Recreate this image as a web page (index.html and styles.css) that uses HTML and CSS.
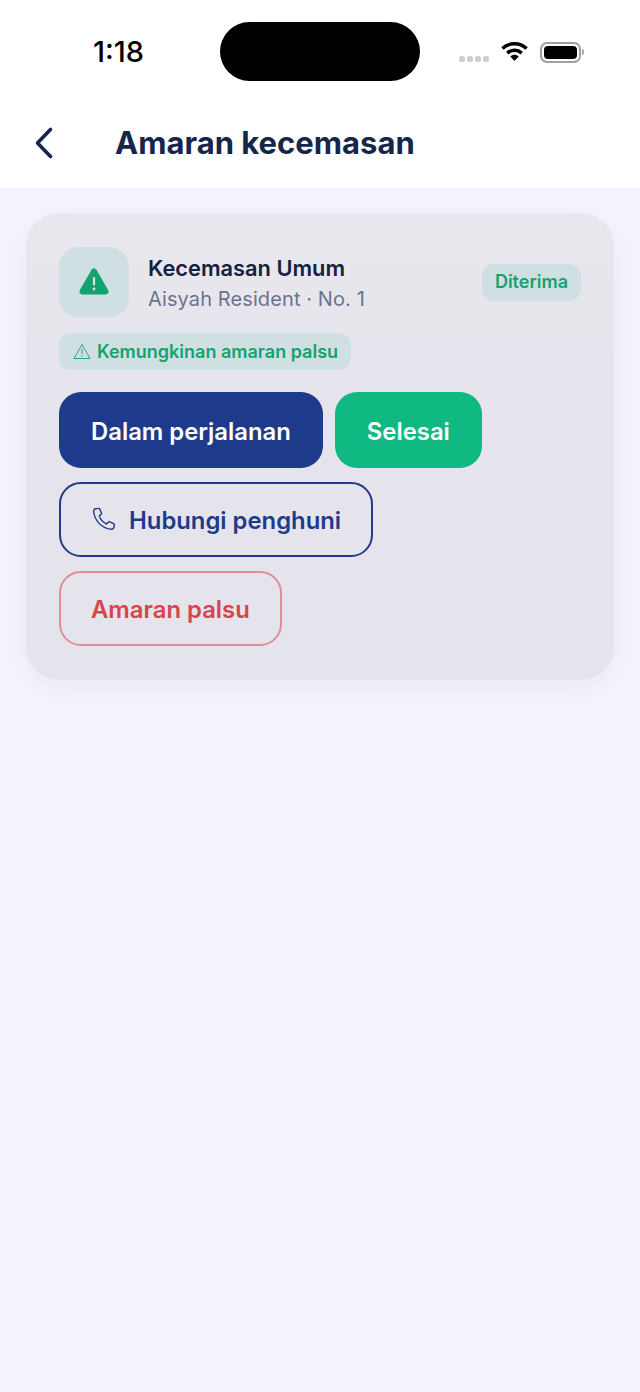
FILE: index.html
```html
<!DOCTYPE html>
<html lang="ms">
<head>
    <meta charset="UTF-8">
    <meta name="viewport" content="width=device-width, initial-scale=1.0">
    <title>Amaran kecemasan</title>
    <link rel="stylesheet" href="styles.css">
</head>
<body>
    <header class="top">
        <div class="status-bar">
            <span class="time">1:18</span>
            <div class="island"></div>
            <div class="status-icons">
                <div class="signal"><i></i><i></i><i></i><i></i></div>
                <svg class="wifi" width="27" height="21" viewBox="0 0 28 21">
                    <path d="M1.5 7.5C8.5 .8 19.5 .8 26.5 7.5" fill="none" stroke="#000" stroke-width="3.6"/>
                    <path d="M6.5 12.2C10.8 8.2 17.2 8.2 21.5 12.2" fill="none" stroke="#000" stroke-width="3.6"/>
                    <path d="M9.6 15.6C12.2 13.2 15.8 13.2 18.4 15.6L14 20.4Z" fill="#000"/>
                </svg>
                <div class="battery"><div class="battery-fill"></div></div>
                <div class="battery-cap"></div>
            </div>
        </div>
        <div class="nav">
            <svg class="back" width="22" height="34" viewBox="0 0 22 34">
                <path d="M17.5 3.5L4.5 17L17.5 30.5" fill="none" stroke="#16254a" stroke-width="3.6" stroke-linecap="round" stroke-linejoin="round"/>
            </svg>
            <h1>Amaran kecemasan</h1>
        </div>
    </header>

    <main class="content">
        <div class="card">
            <div class="card-head">
                <div class="alert-icon">
                    <svg width="32" height="30" viewBox="0 0 32 30">
                        <path d="M16 4.5L27.5 24.5H4.5Z" fill="#12a36f" stroke="#12a36f" stroke-width="6" stroke-linejoin="round"/>
                        <rect x="14.9" y="10" width="2.2" height="8.5" rx="1" fill="#d6e4e4"/>
                        <circle cx="16" cy="22" r="1.4" fill="#d6e4e4"/>
                    </svg>
                </div>
                <div class="card-info">
                    <div class="card-title">Kecemasan Umum</div>
                    <div class="card-sub">Aisyah Resident · No. 1</div>
                </div>
                <span class="badge">Diterima</span>
            </div>

            <div class="chip">
                <svg width="18" height="17" viewBox="0 0 18 17">
                    <path d="M9 1.5L17 15.5H1Z" fill="none" stroke="#12a36f" stroke-width="0.9" stroke-linejoin="round"/>
                    <path d="M9 6.2V10.6M9 12.4V13.2" fill="none" stroke="#12a36f" stroke-width="0.9" stroke-linecap="round"/>
                </svg>
                Kemungkinan amaran palsu
            </div>

            <div class="actions">
                <div class="btn-row">
                    <button class="btn btn-blue">Dalam perjalanan</button>
                    <button class="btn btn-green">Selesai</button>
                </div>
                <button class="btn btn-outline">
                    <svg width="26" height="26" viewBox="0 0 24 24">
                        <path d="M4.2 2.6L7 2.2C7.6 2.1 8 2.4 8.2 2.9L9.6 6.6C9.8 7.1 9.6 7.6 9.2 7.9L7.6 9.1C8.7 12.4 11.2 15.2 14.4 16.6L15.9 15C16.3 14.6 16.8 14.5 17.3 14.7L20.9 16.3C21.4 16.5 21.7 17 21.6 17.5L21.2 19.6C21 20.8 20 21.6 18.8 21.5C10.2 20.9 3.3 13.6 2.5 5.1C2.4 3.8 3 2.8 4.2 2.6Z" fill="none" stroke="#1e3a8a" stroke-width="1.3" stroke-linejoin="round"/>
                    </svg>
                    Hubungi penghuni
                </button>
                <button class="btn btn-danger">Amaran palsu</button>
            </div>
        </div>
    </main>
</body>
</html>
```

FILE: styles.css
```css
html, body {
    margin: 0;
    padding: 0;
}
body {
    width: 640px;
    height: 1392px;
    overflow: hidden;
    font-family: Inter, "Noto Sans", sans-serif;
    background: #f3f4fd;
}
.top {
    background: #fff;
    height: 188px;
}
.status-bar {
    height: 98px;
    box-sizing: border-box;
    padding: 22px 0 0 93px;
    display: flex;
    align-items: flex-start;
}
.time {
    width: 127px;
    font-size: 29px;
    font-weight: 500;
    line-height: 60px;
    color: #000;
}
.island {
    width: 200px;
    height: 59px;
    background: #000;
    border-radius: 30px;
}
.status-icons {
    display: flex;
    align-items: center;
    height: 59px;
    margin-left: 39px;
}
.signal {
    display: flex;
    gap: 2px;
    margin-top: 14px;
    margin-right: 12px;
}
.signal i {
    width: 6px;
    height: 6px;
    border-radius: 2px;
    background: #d0d0d0;
}
.wifi {
    margin-top: -1px;
}
.battery {
    width: 41px;
    height: 21px;
    box-sizing: border-box;
    margin-left: 12px;
    margin-top: 1px;
    padding: 2px;
    border: 2px solid #a0a0a0;
    border-radius: 7px;
}
.battery-fill {
    height: 100%;
    background: #000;
    border-radius: 4px;
}
.battery-cap {
    width: 2px;
    height: 6px;
    margin-left: 1px;
    margin-top: 1px;
    background: #a5a5a5;
    border-radius: 0 2px 2px 0;
}
.nav {
    height: 90px;
    box-sizing: border-box;
    padding: 0 0 1px 33px;
    display: flex;
    align-items: center;
}
.back {
    margin-right: 60px;
}
.nav h1 {
    margin: 0 0 1px;
    font-size: 31px;
    font-weight: 700;
    color: #16254a;
}
.content {
    padding: 25px 26px 0;
}
.card {
    height: 467px;
    box-sizing: border-box;
    padding: 34px 33px;
    border-radius: 32px;
    background: linear-gradient(180deg, #eae8ee 0%, #e6e4ec 35%, #e4e4ec 100%);
    box-shadow: 0 8px 30px rgba(30, 40, 90, 0.05);
}
.card-head {
    display: flex;
    align-items: center;
}
.alert-icon {
    width: 70px;
    height: 70px;
    border-radius: 20px;
    background: #d0dfe1;
    display: flex;
    align-items: center;
    justify-content: center;
}
.card-info {
    flex: 1;
    margin-left: 19px;
    padding-top: 3px;
}
.card-title {
    font-size: 21.8px;
    font-weight: 600;
    color: #14213f;
    line-height: 30px;
}
.card-sub {
    margin-top: 1px;
    font-size: 20px;
    color: #6b7390;
    line-height: 30px;
    letter-spacing: 0.1px;
}
.badge {
    padding: 0 13px;
    height: 37px;
    line-height: 36px;
    border-radius: 12px;
    background: #d0dfe1;
    color: #12a36f;
    font-size: 18px;
    font-weight: 600;
}
.chip {
    display: inline-flex;
    align-items: center;
    gap: 6px;
    height: 37px;
    margin-top: 16px;
    padding: 0 13px 0 14px;
    border-radius: 12px;
    background: #d0dfe1;
    color: #12a36f;
    font-size: 18px;
    font-weight: 600;
}
.actions {
    display: flex;
    flex-direction: column;
    align-items: flex-start;
    gap: 14px;
    margin-top: 22px;
}
.btn-row {
    display: flex;
    gap: 12px;
}
.btn {
    height: 76px;
    box-sizing: border-box;
    padding: 2px 32px 0;
    border: none;
    border-radius: 22px;
    font-family: inherit;
    font-size: 23.85px;
    font-weight: 600;
    display: flex;
    align-items: center;
}
.btn-blue {
    background: #1e3a8a;
    color: #fff;
}
.btn-green {
    background: #10b981;
    color: #fff;
}
.btn-outline {
    background: transparent;
    border: 2px solid #1e3a8a;
    color: #1e3a8a;
    height: 75px;
    padding: 1px 30px 0;
    gap: 12px;
}
.btn-outline svg {
    margin-top: -2px;
}
.btn-danger {
    background: transparent;
    border: 2px solid #e08e96;
    color: #d9434a;
    height: 75px;
    padding: 1px 30px 0;
}
```
